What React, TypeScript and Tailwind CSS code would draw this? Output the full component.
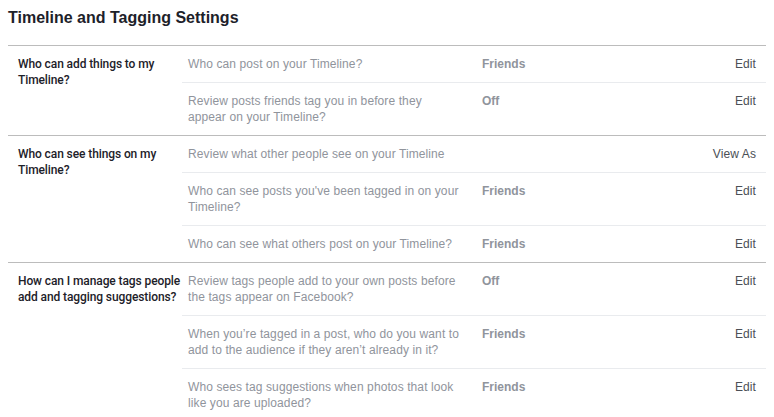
import React from 'react';

type Row = { question: string; value?: string; action: string };
type Section = { label: string; rows: Row[] };

const sections: Section[] = [
  {
    label: 'Who can add things to my Timeline?',
    rows: [
      { question: 'Who can post on your Timeline?', value: 'Friends', action: 'Edit' },
      { question: 'Review posts friends tag you in before they appear on your Timeline?', value: 'Off', action: 'Edit' },
    ],
  },
  {
    label: 'Who can see things on my Timeline?',
    rows: [
      { question: 'Review what other people see on your Timeline', action: 'View As' },
      { question: "Who can see posts you've been tagged in on your Timeline?", value: 'Friends', action: 'Edit' },
      { question: 'Who can see what others post on your Timeline?', value: 'Friends', action: 'Edit' },
    ],
  },
  {
    label: 'How can I manage tags people add and tagging suggestions?',
    rows: [
      { question: 'Review tags people add to your own posts before the tags appear on Facebook?', value: 'Off', action: 'Edit' },
      { question: 'When you\u2019re tagged in a post, who do you want to add to the audience if they aren\u2019t already in it?', value: 'Friends', action: 'Edit' },
      { question: 'Who sees tag suggestions when photos that look like you are uploaded?', value: 'Friends', action: 'Edit' },
    ],
  },
];

export default function App() {
  return (
    <div className="min-h-screen bg-white px-2 pt-[7px] font-['Liberation_Sans',Arial,sans-serif] text-[12px] leading-4">
      <h2 className="text-[16px] leading-[22px] font-bold text-[#1d2129] mb-[16px]">Timeline and Tagging Settings</h2>

      <div className="border-t border-[#bcbcbc]">
        {sections.map((section) => (
          <div key={section.label} className="flex border-b border-[#bcbcbc]">
            {/* Section label */}
            <div className="w-[174px] shrink-0 pl-[10px] pt-[10px] font-['Roboto',sans-serif] font-medium tracking-[-0.1px] text-[#1d2129]">
              {section.label}
            </div>

            {/* Rows */}
            <div className="flex-1">
              {section.rows.map((row, i) => (
                <div
                  key={row.question}
                  className={`flex py-[10px] ${i < section.rows.length - 1 ? 'border-b border-[#e9ebee]' : ''}`}
                >
                  <div className="w-[300px] shrink-0 pl-[6px] pr-[22px] tracking-[0.1px] text-[#90949c]">{row.question}</div>
                  <div className="flex-1 font-bold text-[#90949c]">{row.value}</div>
                  <div className="pr-[10px] tracking-[0.1px] text-[#4b4f56]">{row.action}</div>
                </div>
              ))}
            </div>
          </div>
        ))}
      </div>
    </div>
  );
}
